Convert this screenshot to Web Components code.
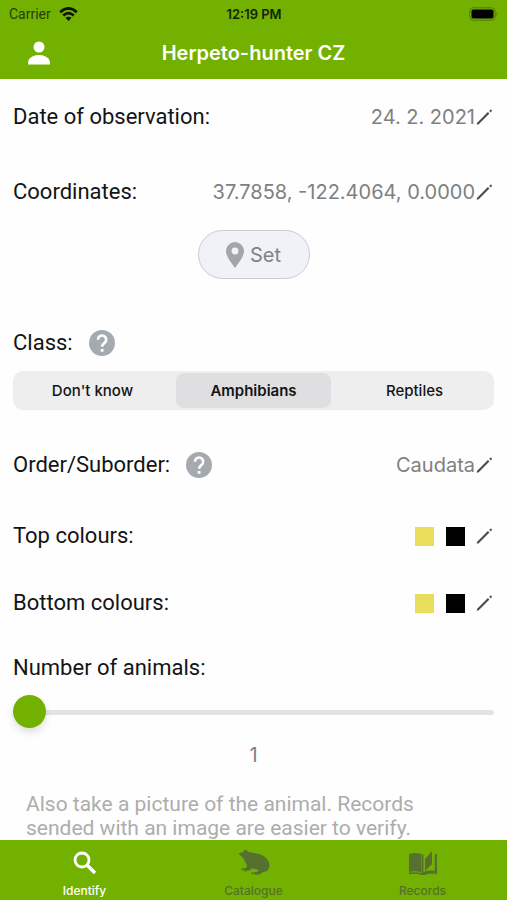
<!DOCTYPE html>
<html lang="en">
<head>
<meta charset="utf-8">
<meta name="viewport" content="width=device-width, initial-scale=1">
<title>Herpeto-hunter CZ</title>
<style>
  html { height: 100%; }
  body { margin: 0; height: 100%; font-family: Inter, "Liberation Sans", sans-serif; background: #fefefe; color: #141414; --green: #72b100; --muted: #808080; --label: 22px/28px Roboto, "Liberation Sans", sans-serif; --value: 20px/28px Inter, "Liberation Sans", sans-serif; }
</style>
</head>
<body>
<hunter-app></hunter-app>
<script>
const define = (name, html, setup) => customElements.define(name, class extends HTMLElement {
  connectedCallback() {
    if (this.shadowRoot) return;
    const root = this.attachShadow({ mode: "open" });
    root.innerHTML = `<style>*{box-sizing:border-box}button{font:inherit;color:inherit;border:0;background:none;padding:0;margin:0}svg{display:block;flex:none}</style>` + (typeof html === "function" ? html(this) : html);
    if (setup) setup(root, this);
  }
});

define("status-bar", `
<style>
  :host { display: grid; grid-template-columns: 1fr auto 1fr; align-items: center; height: 27px; padding: 0 8px 0 9px; font-size: 13px; line-height: 16px; color: #14240a; }
  .left { display: flex; align-items: center; gap: 8px; color: #26400a; font: 14px/16px Roboto, sans-serif; }
  .time { font-weight: 600; }
  .battery { justify-self: end; }
</style>
<span class="left"><span>Carrier</span>
  <svg width="19" height="14" viewBox="0 0 19 14" fill="none" stroke="#0b1503" stroke-width="2.6" aria-label="Wi-Fi"><path d="M1.200 5.200Q9.500-2.300 17.800 5.200"/><path d="M4.200 8.500Q9.500 3.900 14.800 8.500"/><path d="M9.500 14l-3-3.200q3-2.300 6 0z" fill="#0b1503" stroke="none"/></svg>
</span>
<span class="time">12:19 PM</span>
<svg class="battery" width="30" height="14" viewBox="0 0 30 14" aria-label="Battery"><rect x=".8" y=".8" width="25.400" height="12.400" rx="3.500" fill="none" stroke="#4e7b08"/><rect x="2.500" y="2.500" width="22" height="9" rx="1.800" fill="#000"/><path d="M27.500 5q2 2 0 4z" fill="#4e7b08"/></svg>`);

define("title-bar", `
<style>
  :host { display: grid; grid-template-columns: 54px 1fr 54px; align-items: center; height: 52px; padding: 0 12px; color: #fff; }
  button { width: 54px; height: 44px; display: grid; place-items: center; }
  h1 { margin: 0; text-align: center; font-size: 20px; line-height: 24px; font-weight: 600; }
</style>
<button type="button" aria-label="Profile"><svg width="24" height="24" viewBox="0 0 24 24" fill="#fff"><circle cx="12" cy="6" r="5.500"/><path d="M1 23.500v-1.500C1 17 6 14 12 14S23 17 23 22v1.500z"/></svg></button>
<h1><slot></slot></h1>`);

define("pencil-icon", `
<style>:host { display: block; flex: none; }</style>
<svg width="19" height="18" viewBox="0 0 19 18" aria-hidden="true"><path d="M1.700 16.700l.5-2L12.900 4l1.500 1.500L3.700 16.200z" fill="#4a4a4a"/><path d="M14.100 2.800l1.200-1.100q.8-.4 1.400.2t.1 1.300l-1.200 1.200z" fill="#5a5a5a"/></svg>`);

define("help-button", `
<style>:host { display: block; } button { display: block; }</style>
<button type="button" aria-label="Help"><svg width="26" height="26" viewBox="0 0 26 26"><circle cx="13" cy="13" r="13" fill="#a5aab0"/><path d="M9 9.800a4.100 4.100 0 1 1 6.500 3.100c-1.500 1.100-2.400 1.900-2.400 3.900" fill="none" stroke="#fff" stroke-width="2.600"/><rect x="11.700" y="19" width="2.800" height="2.800" fill="#fff"/></svg></button>`);

define("form-row", `
<style>
  :host { display: flex; align-items: center; justify-content: space-between; height: 40px; font: var(--label); }
  .label { display: flex; align-items: center; gap: 16px; }
</style>
<div class="label"><span><slot></slot></span><slot name="help"></slot></div>
<slot name="value"></slot>`);

define("edit-value", `
<style>
  :host { display: block; color: var(--muted); font: var(--value); }
  button { display: flex; align-items: center; height: 40px; }
</style>
<button type="button"><slot></slot><pencil-icon></pencil-icon></button>`);

define("colour-values", `
<style>
  :host { display: block; }
  button { display: flex; align-items: center; height: 40px; }
  .swatches { display: flex; gap: 12px; margin-right: 10px; }
  .sw { width: 19px; height: 19px; }
  .yellow { background: #e9de5b; } .black { background: #000; }
</style>
<button type="button" aria-label="Edit colours"><span class="swatches"><span class="sw yellow"></span><span class="sw black"></span></span><pencil-icon></pencil-icon></button>`);

define("set-button", `
<style>
  :host { display: flex; justify-content: center; }
  button { display: flex; align-items: center; justify-content: center; gap: 6px; width: 112px; height: 49px; border: 1px solid #cbccd0; border-radius: 25px; background: #f1f2f7; color: #7f8185; font: var(--value); }
</style>
<button type="button"><svg width="18" height="26" viewBox="0 0 18 26" aria-hidden="true"><path fill-rule="evenodd" d="M9 0a9 9 0 0 1 9 9c0 5.500-5 11.500-9 17C5 20.500 0 14.500 0 9a9 9 0 0 1 9-9zm0 5.600a3.400 3.400 0 1 0 0 6.800 3.400 3.400 0 0 0 0-6.800z" fill="#a1a6ab"/></svg><slot></slot></button>`);

define("class-picker", el => `
<style>
  :host { display: block; }
  fieldset { display: grid; grid-template-columns: repeat(3, 1fr); gap: 6px; margin: 0; border: 0; padding: 2px; background: #eee; border-radius: 10px; min-width: 0; }
  label { display: grid; place-items: center; height: 35px; border-radius: 8px; font-size: 15px; line-height: 20px; font-weight: 500; }
  input { appearance: none; position: absolute; margin: 0; }
  label:has(:checked) { background: #dfdfe1; font-weight: 600; }
</style>
<fieldset aria-label="Class">${el.getAttribute("options").split(",").map(o => `<label><input type="radio" name="class" value="${o}"${o === el.getAttribute("value") ? " checked" : ""}>${o}</label>`).join("")}</fieldset>`);

define("count-slider", `
<style>
  :host { display: block; font: var(--label); line-height: 40px; }
  label { display: block; margin-bottom: 7px; }
  input { appearance: none; display: block; width: 100%; height: 34px; margin: 0 0 6px; background: none; }
  input::-webkit-slider-runnable-track { height: 5px; border-radius: 3px; background: #e3e3e3; }
  input::-webkit-slider-thumb { appearance: none; width: 33px; height: 33px; margin-top: -15px; border-radius: 50%; background: var(--green); box-shadow: 0 4px 8px #0002; }
  output { display: block; text-align: center; color: var(--muted); font: var(--value); line-height: 40px; }
</style>
<label for="n"><slot></slot></label>
<input id="n" type="range" min="1" max="50" value="1">
<output for="n">1</output>`, root => {
  const input = root.querySelector("input");
  input.addEventListener("input", () => { root.querySelector("output").textContent = input.value; });
});

define("tab-item", `
<style>
  :host { display: block; flex: 1; color: #55702a; }
  :host([active]) { color: #fff; }
  a { display: flex; flex-direction: column; align-items: center; gap: 6px; padding-top: 8px; color: inherit; text-decoration: none; font-size: 12px; line-height: 16px; font-weight: 500; }
  .icon { height: 29px; display: grid; place-items: center; }
</style>
<a href="#"><span class="icon"><slot name="icon"></slot></span><span><slot></slot></span></a>`);

define("hunter-app", `
<style>
  :host { display: flex; flex-direction: column; height: 100%; overflow: hidden; }
  header { background: var(--green); flex: none; }
  main { flex: 1; min-height: 0; overflow: hidden; padding: 18px 13px 0; }
  .coords { margin-top: 35px; }
  set-button { margin-top: 18px; }
  .class { margin-top: 44px; }
  class-picker { margin-top: 8px; }
  .order { margin-top: 35px; }
  .top { margin-top: 31px; }
  .bottom { margin-top: 27px; }
  count-slider { margin-top: 25px; }
  .hint { margin: 17px 0 0; padding: 0 60px 0 13px; font: 21px/24px Roboto, "Liberation Sans", sans-serif; color: #adadad; }
  nav { flex: none; display: flex; height: 60px; background: var(--green); }
</style>
<header><status-bar></status-bar><title-bar>Herpeto-hunter CZ</title-bar></header>
<main>
  <form-row>Date of observation:<edit-value slot="value">24. 2. 2021</edit-value></form-row>
  <form-row class="coords">Coordinates:<edit-value slot="value">37.7858, -122.4064, 0.0000</edit-value></form-row>
  <set-button>Set</set-button>
  <form-row class="class">Class:<help-button slot="help"></help-button></form-row>
  <class-picker options="Don't know,Amphibians,Reptiles" value="Amphibians"></class-picker>
  <form-row class="order">Order/Suborder:<help-button slot="help"></help-button><edit-value slot="value">Caudata</edit-value></form-row>
  <form-row class="top">Top colours:<colour-values slot="value"></colour-values></form-row>
  <form-row class="bottom">Bottom colours:<colour-values slot="value"></colour-values></form-row>
  <count-slider>Number of animals:</count-slider>
  <p class="hint">Also take a picture of the animal. Records sended with an image are easier to verify.</p>
</main>
<nav aria-label="Main">
  <tab-item active>Identify<svg slot="icon" width="24" height="24" viewBox="0 0 24 24" fill="none" stroke="#fff" aria-hidden="true"><circle cx="9" cy="9" r="7" stroke-width="2.800"/><path d="M14 14l8 8" stroke-width="3.400"/></svg></tab-item>
  <tab-item>Catalogue<svg slot="icon" width="32" height="27" viewBox="0 0 32 27" fill="#56702f" aria-hidden="true"><path d="M.5 4.500L5 3 6 1l3 .2.8 1.600L16 4c4 .5 8 1.500 11 4 3.500 3 4.700 6 4.300 10l-2 4-4 1-3.300 2.300-4.500.6-1-.8-3.500.2.500-1.600 5.300-.7 2-1.800-3.500-1.200-3.500-.6-2.300 2-2.700.3-1.600 1.200-.6-1.600-3.300-.2.300-1.500 4.500-.6 1-2.700-2.300-4L5.500 9.500z"/></svg></tab-item>
  <tab-item>Records<svg slot="icon" width="30" height="26" viewBox="0 0 30 26" fill="#56702f" aria-hidden="true"><path d="M1 4q6-1.800 12.500 0v18.500Q7 20.500 1 22z"/><path d="M17 9l7-8v13l-7 7z"/><path d="M14 4.500h1.500V22q4-2 11.200-1.200V4H29v20q-8-1.500-12.500 1h-3Q9 23 1 24.200V22.500q8-1 13 .8z"/></svg></tab-item>
</nav>`);
</script>
</body>
</html>
